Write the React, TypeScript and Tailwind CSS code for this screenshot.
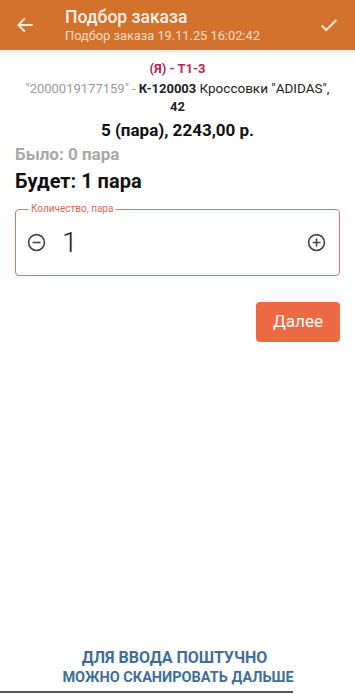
import React, { useState } from 'react';

const font = { fontFamily: 'Roboto, "Noto Sans", sans-serif' };

const App: React.FC = () => {
    const [qty, setQty] = useState(1);

    return (
        <div className="w-[355px] h-[693px] bg-white flex flex-col overflow-hidden" style={font}>
            <div className="h-[50px] bg-[#d2722d] flex items-center shrink-0">
                <div className="w-[50px] flex justify-center">
                    <svg width="20" height="20" viewBox="0 0 24 24" fill="none" stroke="#fbe9dd" strokeWidth="2.2" strokeLinecap="square">
                        <path d="M20 12H5M11 5l-7 7 7 7" />
                    </svg>
                </div>
                <div className="flex-1 pl-[15px] flex flex-col">
                    <span className="text-[17.5px] leading-[20px] font-medium text-[#fdf1e8]">Подбор заказа</span>
                    <span className="text-[12.8px] leading-[16px] text-[#f7ddc9] mt-[1px]">Подбор заказа 19.11.25 16:02:42</span>
                </div>
                <div className="w-[52px] flex justify-center">
                    <svg width="22" height="22" viewBox="0 0 24 24" fill="none" stroke="#fbe9dd" strokeWidth="2.2">
                        <path d="M4 12.5l5 5L20 6.5" />
                    </svg>
                </div>
            </div>
            <div className="h-[3px] bg-[#fbf1ea] shrink-0" />

            <div className="flex flex-col px-[15px]">
                <div className="text-center text-[13px] leading-[17px] font-bold text-[#b3274f] mt-[7px]">(Я) - Т1-3</div>
                <div className="text-center text-[13px] leading-[18px] text-[#222] mt-[2px] px-[8px]">
                    <span className="text-[#9a9a9a]">"2000019177159" - </span>
                    <span className="font-bold">К-120003</span> <span className="text-[13.5px]">Кроссовки "ADIDAS",</span> <span className="font-bold">42</span>
                </div>
                <div className="text-center text-[17px] leading-[22px] font-bold text-[#111] mt-[3px]">5 (пара), 2243,00 р.</div>
                <div className="text-[17px] leading-[22px] font-bold text-[#a8a8a8] mt-[2px]">Было: 0 пара</div>
                <div className="text-[20px] leading-[26px] font-bold text-[#111] mt-[3px]">Будет: 1 пара</div>

                <div className="relative mt-[15px] h-[67px] border-[1.5px] border-[#e27259] rounded-[4px] flex items-center">
                    <span className="absolute -top-[8px] left-[12px] px-[3px] bg-white text-[10px] leading-[14px] text-[#d9694f]">Количество, пара</span>
                    <button className="w-[40px] flex justify-center" onClick={() => setQty(q => Math.max(0, q - 1))}>
                        <svg width="19" height="19" viewBox="0 0 24 24" fill="none" stroke="#444" strokeWidth="2">
                            <circle cx="12" cy="12" r="10" />
                            <path d="M7 12h10" />
                        </svg>
                    </button>
                    <span className="flex-1 text-[28px] leading-[32px] font-light text-[#1b1b1b] ml-[6px]">{qty}</span>
                    <button className="w-[40px] flex justify-center mr-[3px]" onClick={() => setQty(q => q + 1)}>
                        <svg width="19" height="19" viewBox="0 0 24 24" fill="none" stroke="#444" strokeWidth="2">
                            <circle cx="12" cy="12" r="10" />
                            <path d="M7 12h10M12 7v10" />
                        </svg>
                    </button>
                </div>

                <div className="flex justify-end mt-[26px]">
                    <button className="w-[84px] h-[40px] rounded-[4px] bg-[#ee6a45] text-white text-[17px]">Далее</button>
                </div>
            </div>

            <div className="flex-1" />
            <div className="flex flex-col items-center pb-[3px]">
                <span className="text-[16px] leading-[20px] font-bold text-[#3f6f97] -ml-[6px]">ДЛЯ ВВОДА ПОШТУЧНО</span>
                <span className="text-[14.5px] leading-[20px] font-bold text-[#3f6f97] ml-[1px]">МОЖНО СКАНИРОВАТЬ ДАЛЬШЕ</span>
            </div>
            <div className="h-[2px] w-[293px] bg-[#555] shrink-0" />
        </div>
    );
};

export default App;
